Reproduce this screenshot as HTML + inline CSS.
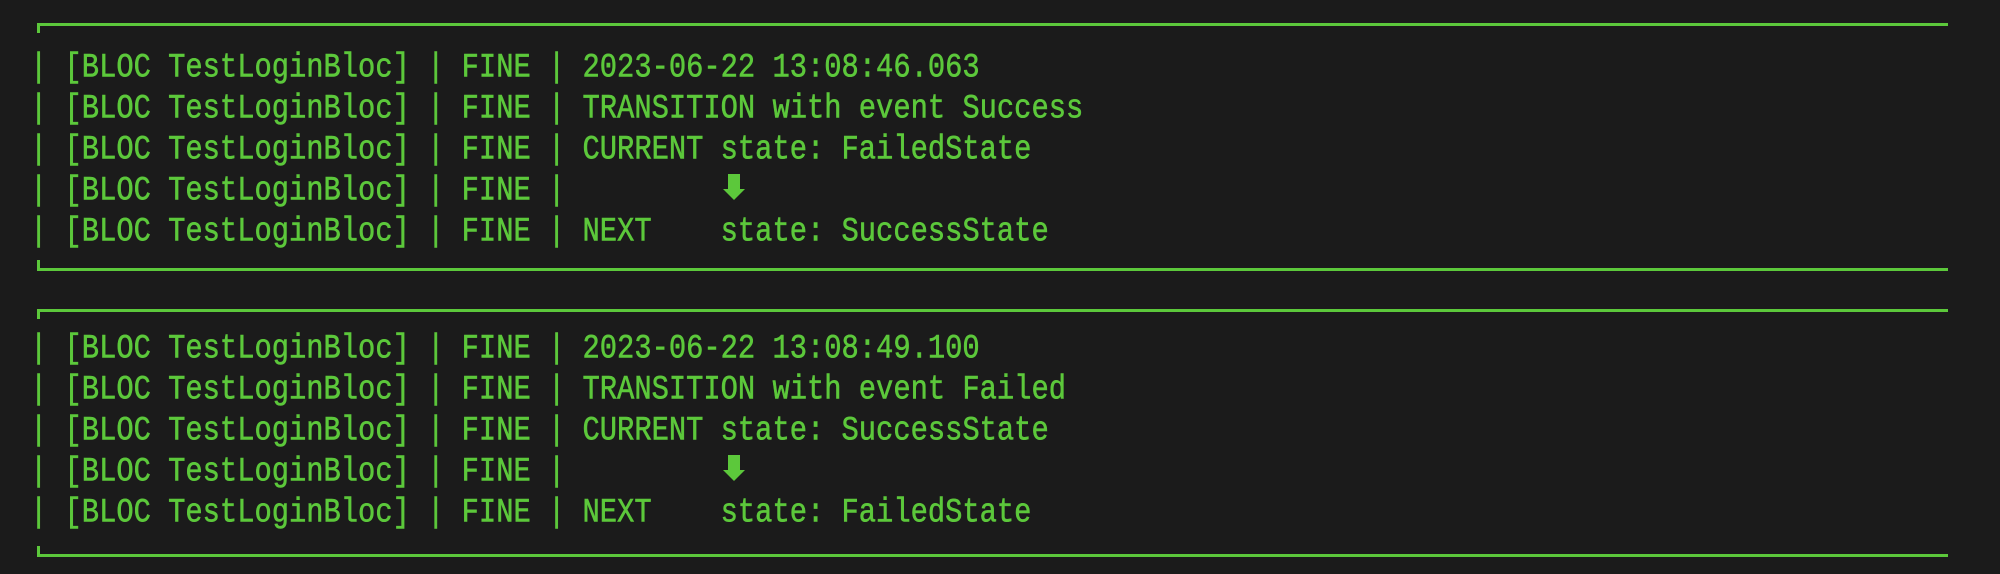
<!DOCTYPE html>
<html><head><style>
html,body{margin:0;padding:0;background:#1b1b1b;width:2000px;height:574px;overflow:hidden}
svg{display:block}
text{font-family:"Liberation Mono",monospace;font-size:28.78px;fill:#5cc83b;stroke:#5cc83b;stroke-width:0.5px;white-space:pre}
</style></head><body>
<svg width="2000" height="574" viewBox="0 0 2000 574">
<rect width="2000" height="574" fill="#1b1b1b"/>
<g fill="#5cc83b">
<rect x="37" y="23" width="1911" height="3"/><rect x="37" y="23" width="3" height="10"/>
<rect x="37" y="268" width="1911" height="3"/><rect x="37" y="260" width="3" height="10"/>
<rect x="37" y="309" width="1911" height="3"/><rect x="37" y="309" width="3" height="10"/>
<rect x="37" y="554" width="1911" height="3"/><rect x="37" y="546" width="3" height="10"/>
</g>
<g transform="translate(30,76.5) scale(1,1.18)"><text>| [BLOC TestLoginBloc] | FINE | 2023-06-22 13:08:46.063</text></g>
<g transform="translate(30,117.5) scale(1,1.18)"><text>| [BLOC TestLoginBloc] | FINE | TRANSITION with event Success</text></g>
<g transform="translate(30,158.5) scale(1,1.18)"><text>| [BLOC TestLoginBloc] | FINE | CURRENT state: FailedState</text></g>
<g transform="translate(30,199.5) scale(1,1.18)"><text>| [BLOC TestLoginBloc] | FINE |</text></g>
<g transform="translate(30,240.5) scale(1,1.18)"><text>| [BLOC TestLoginBloc] | FINE | NEXT    state: SuccessState</text></g>
<g transform="translate(30,357.5) scale(1,1.18)"><text>| [BLOC TestLoginBloc] | FINE | 2023-06-22 13:08:49.100</text></g>
<g transform="translate(30,398.5) scale(1,1.18)"><text>| [BLOC TestLoginBloc] | FINE | TRANSITION with event Failed</text></g>
<g transform="translate(30,439.5) scale(1,1.18)"><text>| [BLOC TestLoginBloc] | FINE | CURRENT state: SuccessState</text></g>
<g transform="translate(30,480.5) scale(1,1.18)"><text>| [BLOC TestLoginBloc] | FINE |</text></g>
<g transform="translate(30,521.5) scale(1,1.18)"><text>| [BLOC TestLoginBloc] | FINE | NEXT    state: FailedState</text></g>
<g fill="#5cc83b">
<path d="M728 174 H740 V189 H745 L734 200 L723 189 H728 Z"/>
<path d="M728 455 H740 V470 H745 L734 481 L723 470 H728 Z"/>
</g>
</svg>
</body></html>
